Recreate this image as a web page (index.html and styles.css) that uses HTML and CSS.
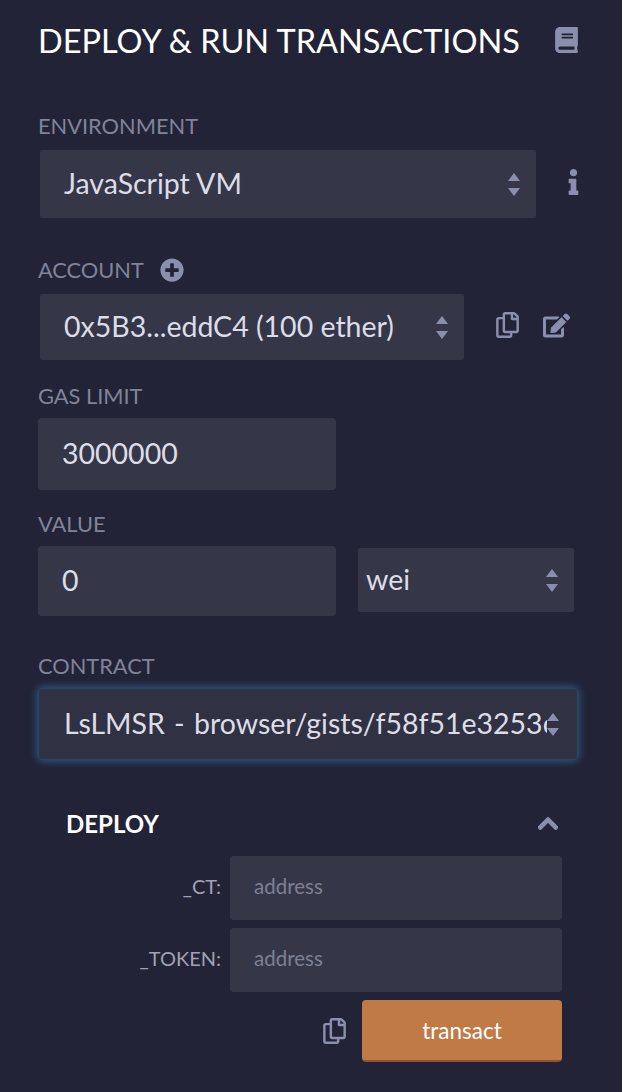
FILE: index.html

```html
<!DOCTYPE html>
<html lang="en">
<head>
    <meta charset="UTF-8">
    <meta name="viewport" content="width=device-width, initial-scale=1.0">
    <title>Deploy &amp; Run Transactions</title>
    <link rel="stylesheet" href="styles.css">
</head>
<body>
    <svg class="defs" width="0" height="0">
        <symbol id="copy" viewBox="0 0 448 512"><path d="M433.941 65.941l-51.882-51.882A48 48 0 0 0 348.118 0H176c-26.51 0-48 21.49-48 48v48H48c-26.51 0-48 21.49-48 48v320c0 26.51 21.49 48 48 48h224c26.51 0 48-21.49 48-48v-48h80c26.51 0 48-21.49 48-48V99.882a48 48 0 0 0-14.059-33.941zM266 464H54a6 6 0 0 1-6-6V150a6 6 0 0 1 6-6h74v224c0 26.51 21.49 48 48 48h96v42a6 6 0 0 1-6 6zm128-96H182a6 6 0 0 1-6-6V54a6 6 0 0 1 6-6h106v88c0 13.255 10.745 24 24 24h88v202a6 6 0 0 1-6 6zm6-256h-64V48h9.632c1.591 0 3.117.632 4.243 1.757l48.368 48.368a6 6 0 0 1 1.757 4.243V112z"/></symbol>
        <symbol id="arrows" viewBox="0 0 12 23"><path d="M6 0l6 8H0zM0 15h12l-6 8z"/></symbol>
    </svg>

    <div class="panel">
        <div class="title-row">
            <h1>DEPLOY &amp; RUN TRANSACTIONS</h1>
            <svg class="icon book" viewBox="0 0 448 512"><path d="M448 360V24c0-13.3-10.7-24-24-24H96C43 0 0 43 0 96v320c0 53 43 96 96 96h328c13.3 0 24-10.7 24-24v-16c0-7.5-3.5-14.3-8.9-18.7-4.2-15.4-4.2-59.3 0-74.7 5.4-4.3 8.9-11.1 8.9-18.6zM128 134c0-3.3 2.7-6 6-6h212c3.3 0 6 2.7 6 6v20c0 3.3-2.7 6-6 6H134c-3.3 0-6-2.7-6-6v-20zm0 64c0-3.3 2.7-6 6-6h212c3.3 0 6 2.7 6 6v20c0 3.3-2.7 6-6 6H134c-3.3 0-6-2.7-6-6v-20zm253.4 250H96c-17.7 0-32-14.3-32-32 0-17.6 14.4-32 32-32h285.4c-1.9 17.1-1.9 46.9 0 64z"/></svg>
        </div>

        <div class="label env-label">ENVIRONMENT</div>
        <div class="row">
            <div class="select env-select">
                <span class="select-text">JavaScript VM</span>
                <svg class="arrows"><use href="#arrows"/></svg>
            </div>
            <svg class="icon info" viewBox="0 0 192 512"><path d="M20 424.229h20V279.771H20c-11.046 0-20-8.954-20-20V212c0-11.046 8.954-20 20-20h112c11.046 0 20 8.954 20 20v212.229h20c11.046 0 20 8.954 20 20V492c0 11.046-8.954 20-20 20H20c-11.046 0-20-8.954-20-20v-47.771c0-11.046 8.954-20 20-20zM96 0C56.235 0 24 32.235 24 72s32.235 72 72 72 72-32.235 72-72S135.764 0 96 0z"/></svg>
        </div>

        <div class="label account-label">
            ACCOUNT
            <svg class="icon plus" viewBox="0 0 512 512"><path d="M256 8C119 8 8 119 8 256s111 248 248 248 248-111 248-248S393 8 256 8zm144 276c0 6.6-5.4 12-12 12h-92v92c0 6.6-5.4 12-12 12h-56c-6.6 0-12-5.4-12-12v-92h-92c-6.6 0-12-5.4-12-12v-56c0-6.6 5.4-12 12-12h92v-92c0-6.6 5.4-12 12-12h56c6.6 0 12 5.4 12 12v92h92c6.6 0 12 5.4 12 12v56z"/></svg>
        </div>
        <div class="row">
            <div class="select account-select">
                <span class="select-text">0x5B3...eddC4 (100 ether)</span>
                <svg class="arrows"><use href="#arrows"/></svg>
            </div>
            <svg class="icon copy account-copy"><use href="#copy"/></svg>
            <svg class="icon edit" viewBox="0 0 576 512"><path d="M402.6 83.2l90.2 90.2c3.8 3.8 3.8 10 0 13.8L274.4 405.6l-92.8 10.3c-12.4 1.4-22.9-9.1-21.5-21.5l10.3-92.8L388.8 83.2c3.8-3.8 10-3.8 13.8 0zm162-22.9l-48.8-48.8c-15.2-15.2-39.9-15.2-55.2 0l-35.4 35.4c-3.8 3.8-3.8 10 0 13.8l90.2 90.2c3.8 3.8 10 3.8 13.8 0l35.4-35.4c15.2-15.3 15.2-40 0-55.2zM384 346.2V448H64V128h229.8c3.2 0 6.2-1.3 8.5-3.5l40-40c7.6-7.6 2.2-20.5-8.5-20.5H48C21.5 64 0 85.5 0 112v352c0 26.5 21.5 48 48 48h352c26.5 0 48-21.5 48-48V306.2c0-10.7-12.9-16-20.5-8.5l-40 40c-2.2 2.3-3.5 5.3-3.5 8.5z"/></svg>
        </div>

        <div class="label gas-label">GAS LIMIT</div>
        <div class="field gas-field">3000000</div>

        <div class="label value-label">VALUE</div>
        <div class="row value-row">
            <div class="field value-field">0</div>
            <div class="select wei-select">
                <span class="select-text">wei</span>
                <svg class="arrows"><use href="#arrows"/></svg>
            </div>
        </div>

        <div class="label contract-label">CONTRACT</div>
        <div class="select contract-select">
            <span class="select-text">LsLMSR - browser/gists/f58f51e3253c</span>
            <svg class="arrows"><use href="#arrows"/></svg>
        </div>

        <div class="deploy">
            <div class="deploy-head">
                <span class="deploy-title">DEPLOY</span>
                <svg class="icon chevron" viewBox="0 0 448 512"><path d="M240.971 130.524l194.343 194.343c9.373 9.373 9.373 24.569 0 33.941l-22.667 22.667c-9.357 9.357-24.522 9.375-33.901.04L224 227.495 69.255 381.516c-9.379 9.335-24.544 9.317-33.901-.04l-22.667-22.667c-9.373-9.373-9.373-24.569 0-33.941L207.03 130.525c9.372-9.373 24.568-9.373 33.941-.001z"/></svg>
            </div>
            <div class="param">
                <label>_CT:</label>
                <div class="param-input">address</div>
            </div>
            <div class="param">
                <label>_TOKEN:</label>
                <div class="param-input">address</div>
            </div>
            <div class="actions">
                <svg class="icon copy"><use href="#copy"/></svg>
                <button>transact</button>
            </div>
        </div>
    </div>
</body>
</html>
```

FILE: styles.css

```css
* { box-sizing: border-box; }
html, body { margin: 0; padding: 0; }
body { background-color: #222336; color: #dcdde8; font-family: Lato, "Open Sans", sans-serif; font-size: 28.5px; width: 622px; height: 1092px; overflow: hidden; }
.defs { position: absolute; }
.panel { padding: 0 0 0 38px; }
.icon { fill: #8a8fad; display: block; flex: none; }

.title-row { display: flex; align-items: center; height: 40px; margin-top: 20px; }
h1 { margin: 2px 0 0; font-size: 32.5px; font-weight: 400; color: #fff; white-space: nowrap; width: 517px; line-height: 38px; }
.book { width: 23px; height: 26px; }

.label { font-size: 21.8px; line-height: 28px; color: #80839a; }
.env-label { margin-top: 52px; }
.account-label { margin-top: 38px; display: flex; align-items: center; gap: 16px; }
.gas-label { margin-top: 22px; }
.value-label { margin-top: 20px; }
.contract-label { margin-top: 36px; }
.plus { width: 24px; height: 24px; }

.row { display: flex; align-items: center; }
.select { display: flex; align-items: center; justify-content: space-between; background-color: #353748; border-radius: 2px; padding: 0 16px 0 24px; overflow: hidden; white-space: nowrap; }
.select-text { overflow: hidden; flex: 1; padding-bottom: 2px; }
.arrows { width: 12px; height: 23px; fill: #8a8fad; flex: none; }

.env-select { width: 496px; height: 68px; margin: 10px 0 0 2px; }
.info { width: 11px; height: 26px; margin: 6px 0 0 32px; }
.account-select { width: 424px; height: 66px; margin: 10px 0 0 2px; }
.copy { width: 23px; height: 26px; }
.account-copy { margin: 6px 0 0 32px; }
.edit { width: 27px; height: 25px; margin: 6px 0 0 24px; }

.field { background-color: #353748; border-radius: 4px; display: flex; align-items: center; padding: 0 24px 2px; width: 298px; }
.gas-field { height: 72px; margin-top: 8px; }
.value-row { margin-top: 8px; gap: 22px; align-items: flex-start; }
.value-field { height: 70px; }
.wei-select { width: 216px; height: 64px; margin-top: 2px; padding: 0 16px 0 8px; }

.contract-select { width: 540px; height: 72px; margin-top: 8px; padding: 0 18px 0 25px; border: 1px solid #2a4560; border-radius: 4px; background-color: #303142; box-shadow: 0 0 10px rgba(50, 135, 195, 0.7); word-spacing: 2px; }

.deploy { padding: 0 16px 0 28px; width: 540px; margin-top: 44px; }
.deploy-head { display: flex; align-items: center; justify-content: space-between; height: 38px; padding-right: 4px; }
.deploy-title { font-size: 24px; font-weight: 700; color: #fff; }
.chevron { width: 20px; height: 23px; stroke: #8a8fad; stroke-width: 24; }
.param { display: flex; align-items: center; justify-content: flex-end; gap: 9px; margin-top: 8px; }
.deploy-head + .param { margin-top: 14px; }
.param label { font-size: 20px; color: #a0a2b4; margin-bottom: 4px; }
.param-input { width: 332px; height: 64px; background-color: #353748; border-radius: 4px; display: flex; align-items: center; padding: 0 24px 4px; font-size: 20.5px; color: #7d8094; }
.actions { display: flex; align-items: center; justify-content: flex-end; gap: 16px; margin-top: 8px; }
button { width: 200px; height: 62px; background-color: #bf7a45; color: #fff; border: none; border-bottom: 2px solid #8a5530; border-radius: 4px; font-family: inherit; font-size: 22.5px; padding: 0; }
```
